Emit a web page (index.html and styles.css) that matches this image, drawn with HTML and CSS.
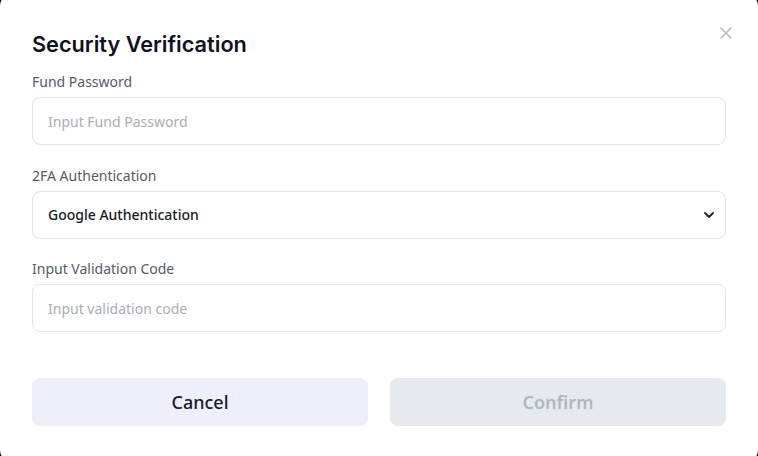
FILE: index.html
```html
<!DOCTYPE html>
<html>
<head>
<meta charset="utf-8">
<link rel="stylesheet" href="styles.css">
</head>
<body>
<div class="modal">
  <button class="close" aria-label="Close">
    <svg width="12" height="12" viewBox="0 0 12 12"><path d="M1 1L11 11M11 1L1 11" stroke="#b6bac4" stroke-width="1.6" stroke-linecap="round"/></svg>
  </button>
  <h1 class="title">Security Verification</h1>
  <div class="field">
    <label class="label">Fund Password</label>
    <div class="box"><span class="placeholder">Input Fund Password</span></div>
  </div>
  <div class="field">
    <label class="label">2FA Authentication</label>
    <div class="box select">
      <span class="value">Google Authentication</span>
      <svg class="chev" width="10" height="6" viewBox="0 0 10 6"><path d="M1 1L5 5L9 1" fill="none" stroke="#1a1d29" stroke-width="1.8" stroke-linecap="round" stroke-linejoin="round"/></svg>
    </div>
  </div>
  <div class="field">
    <label class="label">Input Validation Code</label>
    <div class="box"><span class="placeholder">Input validation code</span></div>
  </div>
  <div class="actions">
    <button class="btn cancel">Cancel</button>
    <button class="btn confirm">Confirm</button>
  </div>
</div>
</body>
</html>
```
FILE: styles.css
```css
html, body {
  margin: 0;
  padding: 0;
  height: 456px;
  overflow: hidden;
  background: #111318;
}
.modal {
  position: relative;
  box-sizing: border-box;
  margin-top: -6px;
  height: 468px;
  background: #ffffff;
  border-radius: 12px;
  padding: 36px 32px 0 32px;
  font-family: "Noto Sans", "Open Sans", sans-serif;
}
.close {
  position: absolute;
  top: 33px;
  right: 26px;
  width: 12px;
  height: 12px;
  padding: 0;
  border: 0;
  background: none;
  display: flex;
}
.title {
  margin: 0 0 14px 0;
  font-family: "Inter", sans-serif;
  font-size: 21.7px;
  line-height: 28px;
  font-weight: 600;
  color: #0f1222;
}
.field {
  display: flex;
  flex-direction: column;
  margin-bottom: 20.5px;
}
.label {
  font-size: 14px;
  line-height: 20px;
  color: #555b6a;
  margin-bottom: 5px;
}
.box {
  box-sizing: border-box;
  height: 48px;
  border: 1px solid #e3e5ef;
  border-radius: 8px;
  padding: 0 15px;
  display: flex;
  align-items: center;
  font-size: 14px;
}
.placeholder {
  color: #a8adb8;
}
.select {
  justify-content: space-between;
  padding-right: 11px;
}
.value {
  color: #161a27;
  font-weight: 500;
}
.actions {
  display: flex;
  gap: 22px;
  margin-top: 46px;
}
.btn {
  flex: 1;
  height: 48px;
  border: 0;
  border-radius: 8px;
  font-family: "Noto Sans", "Open Sans", sans-serif;
  font-size: 18px;
}
.cancel {
  background: #eef0f9;
  color: #161a27;
  font-weight: 500;
}
.confirm {
  background: #e6e9ed;
  color: #b2b7bf;
  font-weight: 600;
}
```
